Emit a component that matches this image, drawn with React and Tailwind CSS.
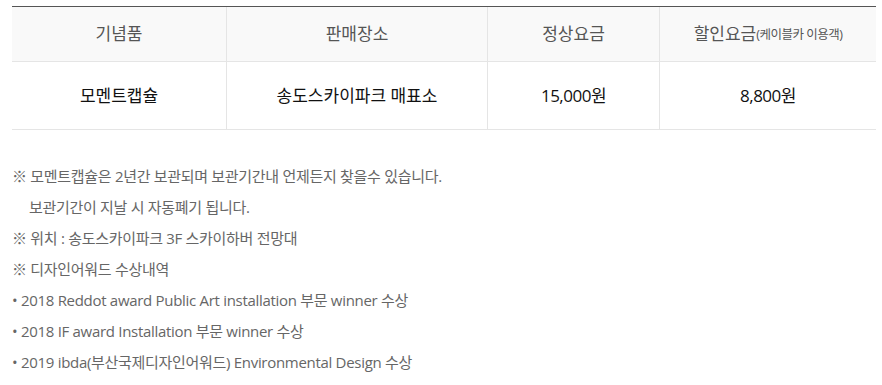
export default function App() {
  const font = { fontFamily: '"Open Sans", "Noto Sans CJK KR", sans-serif' };
  return (
    <div className="w-[882px] h-[385px] bg-white pt-[6px] px-[12px]" style={font}>
      <div className="w-[864px] border-t border-[#555] grid grid-cols-[215px_261px_172px_216px]">
        <div className="h-[55px] bg-[#f9f9f9] border-b border-[#e5e5e5] border-r flex items-center justify-center text-[17px] text-[#555]">기념품</div>
        <div className="h-[55px] bg-[#f9f9f9] border-b border-[#e5e5e5] border-r flex items-center justify-center text-[17px] text-[#555]">판매장소</div>
        <div className="h-[55px] bg-[#f9f9f9] border-b border-[#e5e5e5] border-r flex items-center justify-center text-[17px] text-[#555]">정상요금</div>
        <div className="h-[55px] bg-[#f9f9f9] border-b border-[#e5e5e5] flex items-center justify-center text-[17px] text-[#555]">
          할인요금<span className="text-[12.5px] tracking-[-0.5px] pt-[2px]">(케이블카 이용객)</span>
        </div>
        <div className="h-[68px] border-b border-[#e5e5e5] border-r flex items-center justify-center text-[17px] text-[#111]">모멘트캡슐</div>
        <div className="h-[68px] border-b border-[#e5e5e5] border-r flex items-center justify-center text-[17px] text-[#111]">송도스카이파크 매표소</div>
        <div className="h-[68px] border-b border-[#e5e5e5] border-r flex items-center justify-center text-[17px] text-[#111] tracking-[-0.5px]">15,000원</div>
        <div className="h-[68px] border-b border-[#e5e5e5] flex items-center justify-center text-[17px] text-[#111] tracking-[-0.5px]">8,800원</div>
      </div>
      <div className="mt-[31px] text-[15px] leading-[31px] text-[#666] tracking-[-0.3px]">
        <p>※ 모멘트캡슐은 2년간 보관되며 보관기간내 언제든지 찾을수 있습니다.</p>
        <p className="pl-[17px]">보관기간이 지날 시 자동폐기 됩니다.</p>
        <p>※ 위치 : 송도스카이파크 3F 스카이하버 전망대</p>
        <p>※ 디자인어워드 수상내역</p>
        <p>• 2018 Reddot award Public Art installation 부문 winner 수상</p>
        <p>• 2018 IF award Installation 부문 winner 수상</p>
        <p>• 2019 ibda(부산국제디자인어워드) Environmental Design 수상</p>
      </div>
    </div>
  );
}
